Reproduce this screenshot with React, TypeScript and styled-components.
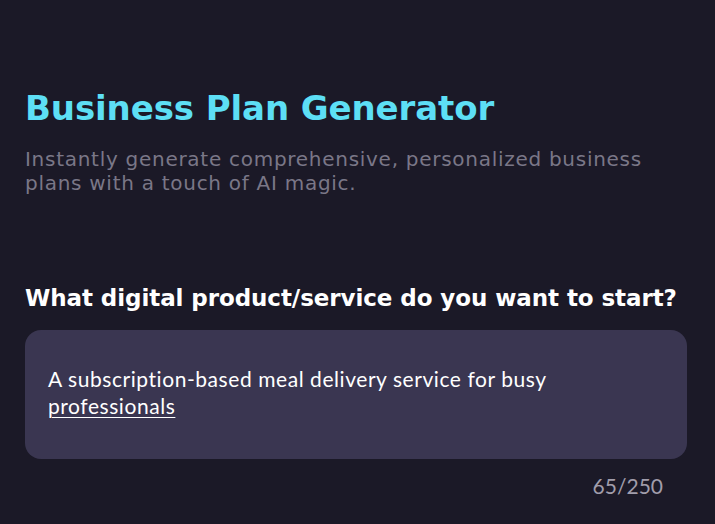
import React from "react";
import styled, { createGlobalStyle } from "styled-components";

const Global = createGlobalStyle`
  html, body { margin: 0; padding: 0; background: #1b1927; }
  body { width: 715px; height: 524px; overflow: hidden; }
`;

const Page = styled.main`
  box-sizing: border-box;
  width: 715px;
  height: 524px;
  background: #1b1927;
  padding: 86px 28px 0 25px;
  display: flex;
  flex-direction: column;
`;

const Title = styled.h1`
  margin: 0;
  font-family: "DejaVu Sans", "Noto Sans", sans-serif;
  font-weight: 700;
  font-size: 34px;
  line-height: 44px;
  letter-spacing: -0.1px;
  color: #5ddff5;
`;

const Subtitle = styled.p`
  margin: 17px 0 0;
  font-family: "DejaVu Sans", "Noto Sans", sans-serif;
  font-weight: 400;
  font-size: 20px;
  line-height: 24px;
  letter-spacing: 0.72px;
  color: #7a7787;
  max-width: 645px;
`;

const Question = styled.h2`
  margin: 88px 0 0;
  font-family: "DejaVu Sans", "Noto Sans", sans-serif;
  font-weight: 700;
  font-size: 23px;
  line-height: 30px;
  letter-spacing: -0.08px;
  color: #ffffff;
`;

const InputBox = styled.div`
  margin-top: 17px;
  box-sizing: border-box;
  height: 129px;
  background: #3a3651;
  border-radius: 16px;
  padding: 35px 23px;
  font-family: "Lato", "Noto Sans", sans-serif;
  font-size: 21px;
  line-height: 27px;
  letter-spacing: 0.56px;
  color: #ffffff;
`;

const Underlined = styled.span`
  text-decoration: underline;
  text-underline-offset: 3px;
  text-decoration-thickness: 1px;
`;

const Counter = styled.div`
  margin-top: 15px;
  text-align: right;
  padding-right: 24px;
  font-family: "Lato", "Noto Sans", sans-serif;
  font-size: 21px;
  line-height: 24px;
  color: #a19dab;
`;

export default function App() {
  return (
    <>
      <Global />
      <Page>
        <Title>Business Plan Generator</Title>
        <Subtitle>
          Instantly generate comprehensive, personalized business plans with a touch of AI magic.
        </Subtitle>
        <Question>What digital product/service do you want to start?</Question>
        <InputBox>
          A subscription-based meal delivery service for busy <Underlined>professionals</Underlined>
        </InputBox>
        <Counter>65/250</Counter>
      </Page>
    </>
  );
}
